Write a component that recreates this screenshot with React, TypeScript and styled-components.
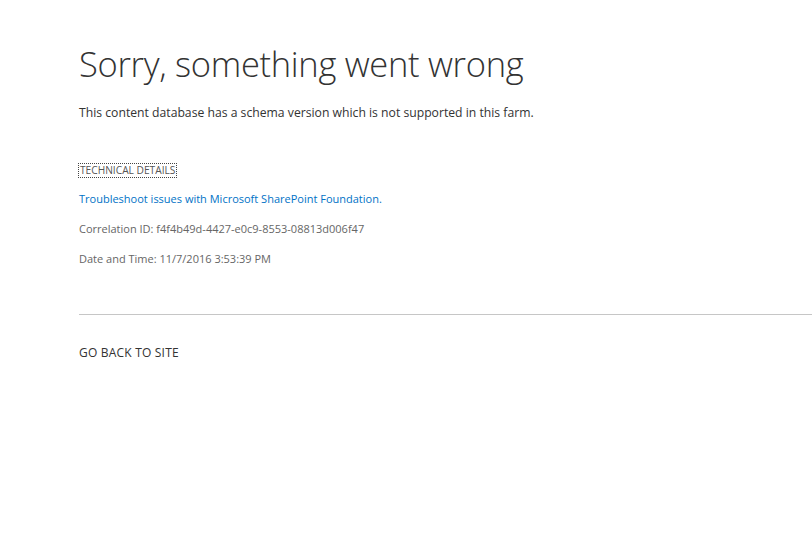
import styled, { createGlobalStyle } from "styled-components";

const GlobalStyle = createGlobalStyle`
  html, body {
    margin: 0;
    padding: 0;
    background: #ffffff;
  }
  body {
    font-family: "Open Sans", "Noto Sans", sans-serif;
    color: #444444;
  }
`;

const Page = styled.div`
  width: 812px;
  height: 550px;
  overflow: hidden;
  padding: 39px 0 0 79px;
  box-sizing: border-box;
`;

const Title = styled.h1`
  margin: 0;
  font-family: "Open Sans", "Noto Sans", sans-serif;
  font-weight: 300;
  font-size: 34.5px;
  line-height: 50px;
  color: #333333;
  letter-spacing: -0.3px;
`;

const Message = styled.p`
  margin: 16px 0 0;
  font-size: 12.2px;
  line-height: 16px;
  color: #333333;
`;

const Details = styled.div`
  margin-top: 43px;
  display: flex;
  flex-direction: column;
  align-items: flex-start;
  gap: 14px;
`;

const DetailsToggle = styled.span`
  font-size: 10.2px;
  line-height: 13px;
  color: #555555;
  outline: 1px dotted #444444;
  outline-offset: 0px;
  padding: 0 1px;
`;

const Line = styled.div<{ $link?: boolean }>`
  font-size: 11px;
  line-height: 16px;
  color: ${(p) => (p.$link ? "#0072c6" : "#666666")};
`;

const Rule = styled.hr`
  margin: 47px 0 0;
  border: none;
  border-top: 1px solid #c6c6c6;
`;

const BackLink = styled.div`
  margin-top: 30px;
  font-size: 12px;
  line-height: 16px;
  color: #333333;
  letter-spacing: 0.2px;
`;

export default function App() {
  return (
    <>
      <GlobalStyle />
      <Page>
        <Title>Sorry, something went wrong</Title>
        <Message>This content database has a schema version which is not supported in this farm.</Message>
        <Details>
          <DetailsToggle>TECHNICAL DETAILS</DetailsToggle>
          <Line $link>Troubleshoot issues with Microsoft SharePoint Foundation.</Line>
          <Line>Correlation ID: f4f4b49d-4427-e0c9-8553-08813d006f47</Line>
          <Line>Date and Time: 11/7/2016 3:53:39 PM</Line>
        </Details>
        <Rule />
        <BackLink>GO BACK TO SITE</BackLink>
      </Page>
    </>
  );
}
